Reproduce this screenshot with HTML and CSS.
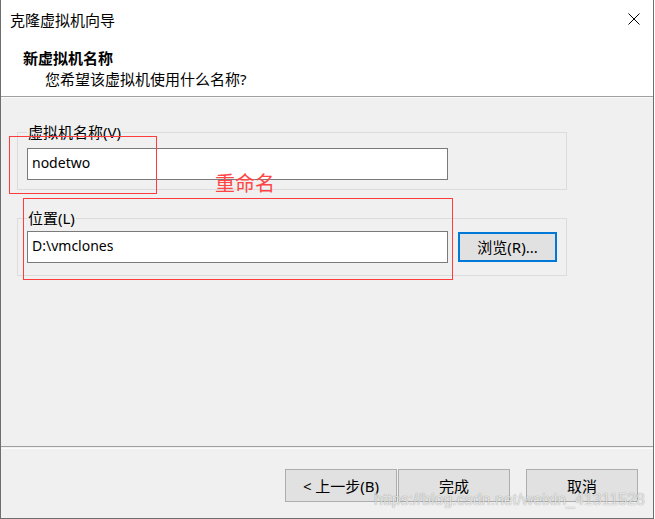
FILE: index.html
```html
<!DOCTYPE html>
<html lang="zh-CN">
<head>
<meta charset="utf-8">
<title>克隆虚拟机向导</title>
<link rel="stylesheet" href="styles.css">
</head>
<body>
<div class="window">
  <div class="header">
    <div class="titlebar">
      <span class="title">克隆虚拟机向导</span>
      <svg class="close" width="12" height="12" viewBox="0 0 12 12"><path d="M0.5 0.5 L11.5 11.5 M11.5 0.5 L0.5 11.5" stroke="#000" stroke-width="1" fill="none"/></svg>
    </div>
    <div class="heading">新虚拟机名称</div>
    <div class="subheading">您希望该虚拟机使用什么名称?</div>
  </div>
  <div class="sep"></div>
  <div class="content">
    <fieldset class="group group-name">
      <legend>虚拟机名称(V)</legend>
      <div class="field">nodetwo</div>
    </fieldset>
    <fieldset class="group group-loc">
      <legend>位置(L)</legend>
      <div class="row">
        <div class="field">D:\vmclones</div>
        <button class="btn btn-default">浏览(R)...</button>
      </div>
    </fieldset>
  </div>
  <div class="footer">
    <button class="btn btn-wide">&lt; 上一步(B)</button>
    <button class="btn btn-wide">完成</button>
    <button class="btn btn-wide btn-cancel">取消</button>
  </div>
  <div class="mark mark-1"></div>
  <div class="mark mark-2"></div>
  <div class="mark-text">重命名</div>
  <div class="watermark">https://blog.csdn.net/weixin_41311528</div>
</div>
</body>
</html>
```
FILE: styles.css
```css
html, body {
  margin: 0;
  padding: 0;
  background: #ffffff;
}
body {
  width: 655px;
  height: 519px;
  overflow: hidden;
  font-family: "Noto Sans", "Noto Sans CJK SC", sans-serif;
  color: #000;
}
.window {
  position: relative;
  box-sizing: border-box;
  width: 654px;
  height: 519px;
  border-left: 1px solid #6e6e6e;
  border-right: 1px solid #6e6e6e;
  border-bottom: 1px solid #6e6e6e;
  background: #f0f0f0;
  display: flex;
  flex-direction: column;
}
.header {
  height: 96px;
  background: #ffffff;
  font-size: 15px;
  line-height: 20px;
}
.titlebar {
  height: 40px;
  display: flex;
  align-items: center;
  justify-content: space-between;
  padding: 0 13px 0 9px;
}
.title {
  line-height: 20px;
}
.close {
  display: block;
  margin-top: -2px;
}
.heading {
  margin-top: 8px;
  padding-left: 22px;
  font-weight: bold;
}
.subheading {
  margin-top: 1px;
  padding-left: 44px;
}
.sep {
  height: 2px;
  background: linear-gradient(#a0a0a0 0 1px, #fafafa 1px 2px);
}
.content {
  flex: 1;
  padding: 26px 0 0 16px;
  font-size: 15px;
}
.group {
  box-sizing: border-box;
  width: 550px;
  margin: 0;
  border: 1px solid #dcdcdc;
  min-inline-size: 0;
}
.group legend {
  padding: 0 1px;
  line-height: 16px;
  font-size: 15px;
}
.group-name {
  padding: 8px 9px 9px 9px;
}
.group-loc {
  margin-top: 20px;
  padding: 5px 9px 12px 9px;
}
.field {
  box-sizing: border-box;
  width: 421px;
  height: 32px;
  border: 1px solid #7a7a7a;
  background: #ffffff;
  padding-left: 4px;
  font-size: 14px;
  line-height: 27px;
}
.row {
  display: flex;
  align-items: center;
  gap: 10px;
}
.btn {
  box-sizing: border-box;
  margin: 0;
  border: 1px solid #adadad;
  background: #e1e1e1;
  font-family: "Noto Sans", "Noto Sans CJK SC", sans-serif;
  font-size: 15px;
  line-height: 18px;
  color: #000;
  padding: 0;
}
.btn-default {
  width: 99px;
  height: 30px;
  border: 2px solid #0078d7;
}
.footer {
  box-sizing: border-box;
  height: 72px;
  border-top: 1px solid #a0a0a0;
  background: linear-gradient(#f0f0f0 0 1px, #fcfcfc 1px 2px, #f0f0f0 2px);
  display: flex;
  justify-content: flex-end;
  align-items: flex-start;
  gap: 1px;
  padding: 22px 15px 0 0;
}
.btn-wide {
  width: 112px;
  height: 33px;
}
.btn-cancel {
  margin-left: 15px;
}
.mark {
  position: absolute;
  box-sizing: border-box;
  border: 1px solid #ff3b3b;
}
.mark-1 {
  left: 8px;
  top: 136px;
  width: 148px;
  height: 58px;
}
.mark-2 {
  left: 22px;
  top: 198px;
  width: 430px;
  height: 82px;
}
.mark-text {
  position: absolute;
  left: 214px;
  top: 173px;
  font-size: 20px;
  line-height: 22px;
  color: #ff4646;
}
.watermark {
  position: absolute;
  left: 373px;
  top: 490px;
  font-family: "Liberation Sans", Arial, sans-serif;
  font-size: 16px;
  line-height: 20px;
  color: rgba(255, 255, 255, 0.75);
  text-shadow: 0 0 1px rgba(0, 0, 0, 0.45);
  white-space: nowrap;
}
```
